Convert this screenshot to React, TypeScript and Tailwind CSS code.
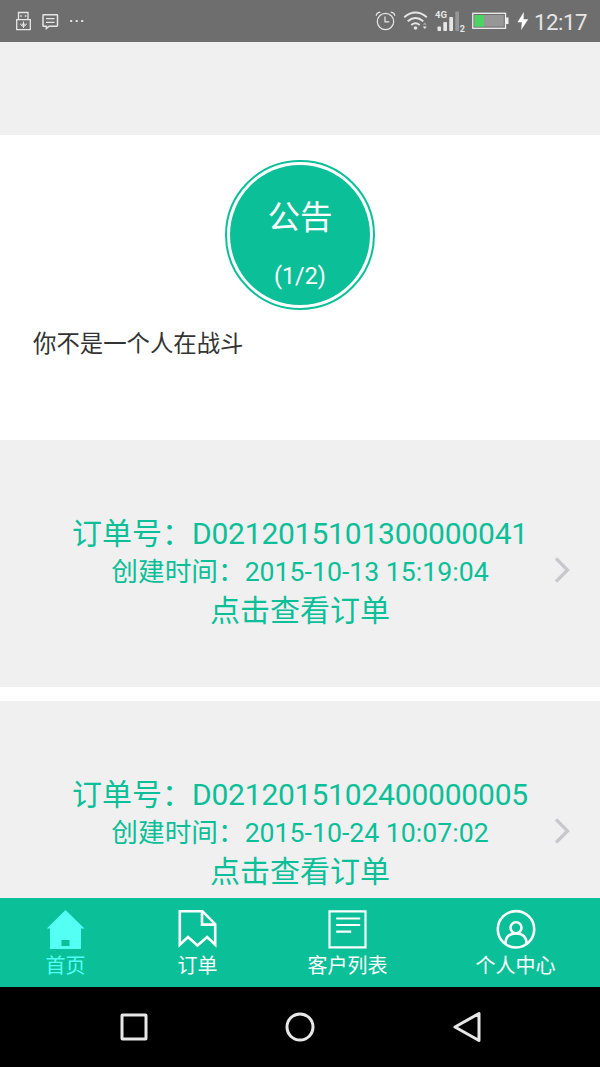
import type { ReactNode } from "react";

interface Order {
  id: string;
  createdAt: string;
}

const orders: Order[] = [
  { id: "D0212015101300000041", createdAt: "2015-10-13 15:19:04" },
  { id: "D0212015102400000005", createdAt: "2015-10-24 10:07:02" },
];

function StatusBar() {
  return (
    <header className="flex h-[41.5px] shrink-0 items-center bg-[#6e6e6e] pl-4 text-[#e6e6e6]">

      {/* USB */}
      <svg className="mr-[11px]" width={15} height={20} viewBox="0 0 15 20" fill="none" stroke="currentColor">
        <path d="M2.500 8V1.500h9.500V8M.7 8.700h13.600v10H.7Z" strokeWidth="1.300" />
        <path d="M4.200 5h1.600M8.800 5h1.600" strokeWidth="1.600" />
        <path d="M7.500 10.500v6.500M4.900 12.500v1.500l2.600 1.600 2.600-1.600v-1.500" strokeWidth="1" />
        <circle cx="7.500" cy="13.500" r="1.300" fill="currentColor" stroke="none" />
      </svg>

      {/* Message */}
      <svg width={17} height={18} viewBox="0 0 17 18" fill="none" stroke="currentColor" strokeWidth="1.500">
        <path d="M1.700 2.700h13.100q.7 0 .7.700v10.200q0 .7-.7.700H7l-2.600 2.200v-2.200H1.700q-.7 0-.7-.7V3.400q0-.7.700-.7Z" />
        <path d="M4 6.700h8.500M4 10.300h8.500" strokeWidth="1.200" />
      </svg>

      <svg className="ml-[10px]" width={16} height={4} viewBox="0 0 16 4" fill="currentColor">
        <path d="M1.200 1h2v2h-2zM6.700 1h2v2h-2zM12.200 1h2v2h-2z" />
      </svg>

      {/* Alarm */}
      <svg className="ml-auto" width={21} height={20} viewBox="0 0 21 20" fill="none" stroke="currentColor" strokeWidth="1.200">
        <circle cx="10.500" cy="10.500" r="8.200" />
        <path d="M10 5.500v5.300h4.200M1.300 4.800q-.2-2.800 4-3.600M19.700 4.800q.2-2.800-4-3.600" />
      </svg>

      {/* Wifi */}
      <svg className="ml-[7px]" width={26} height={21} viewBox="0 0 26 21" fill="none" stroke="currentColor" strokeWidth="1.900">
        <path d="M1.200 7.200q11.300-9.500 22.600 0M4.700 11.200q7.800-6.400 15.600 0M8.300 15q4.200-3.400 8.400 0" />
        <circle cx="12.500" cy="18" r="1.800" fill="currentColor" stroke="none" />
        <path d="m19.800 14.800 2-2.400 2 2.400Z" fill="#aaa" stroke="none" />
        <path d="m19.800 16.500 2 2.600 2-2.600Z" fill="currentColor" stroke="none" />
      </svg>

      {/* Signal */}
      <svg className="ml-[6px]" width={32} height={24} viewBox="0 0 32 24" fill="currentColor">
        <text x="0" y="9" fontSize="9.500" fontWeight="700" fontFamily="Roboto, sans-serif">4G</text>
        <rect x="2.500" y="17.500" width="3.500" height="4.500" rx=".7" />
        <rect x="8.300" y="13" width="3.700" height="9" rx=".7" />
        <rect x="14.300" y="8" width="3.700" height="14" rx=".7" />
        <rect x="20.300" y="2.500" width="3.700" height="19.500" rx=".7" fill="#969696" />
        <text x="24.700" y="22.500" fontSize="9" fontWeight="700" fontFamily="Roboto, sans-serif">2</text>
      </svg>

      {/* Battery */}
      <svg className="ml-[5px]" width={37} height={18} viewBox="0 0 37 18">
        <rect x=".8" y="1.300" width="32.700" height="15" fill="none" stroke="#f0f0f0" strokeWidth="1.300" />
        <path d="M34 5.500h2.500v6.500H34z" fill="#f0f0f0" />
        <rect x="2.500" y="3" width="29.300" height="11.600" fill="#979797" />
        <rect x="2.500" y="3" width="9.500" height="11.600" fill="#4bd364" />
      </svg>
      <svg className="ml-[8px]" width={12} height={20} viewBox="0 0 12 20" fill="#fff">
        <path d="M6.800 1 .5 11.200h4.300L4.200 19l7-10.800H6.600Z" />
      </svg>

      <span className="mt-[2px] mr-[13px] ml-[5px] text-[22.300px] leading-none tracking-[-0.5px]">12:17</span>
    </header>
  );
}

function Notice() {
  return (
    <section className="h-[305px] shrink-0 bg-white pt-[25px]">
      <div className="mx-auto flex size-[150px] items-center justify-center rounded-full border-2 border-[#0bbf98]">
        <div className="flex size-[140px] flex-col items-center rounded-full bg-[#0bbf98] pt-[33px] text-white">
          <span className="text-[32.500px] leading-[40px]">公告</span>
          <span className="mt-[23px] text-[23.300px] leading-[30px]">(1/2)</span>
        </div>
      </div>
      <p className="mt-[19px] pl-[33px] text-[23.400px] leading-[30px] text-[#333]">你不是一个人在战斗</p>
    </section>
  );
}

function OrderCard({ order }: { order: Order }) {
  return (
    <button className="flex h-[247px] w-full shrink-0 items-start bg-[#f0f0f0] pt-[75px] text-center text-[#0bbf98]">
      <span className="w-[45px]" />
      <span className="flex-1 whitespace-nowrap">
        <span className="block text-[30px] leading-[38px]">
          订单号：<span className="tracking-[-0.2px]">{order.id}</span>
        </span>
        <span className="block text-[26.670px] leading-[38px]">创建时间：{order.createdAt}</span>
        <span className="block text-[30px] leading-[39px]">点击查看订单</span>
      </span>
      <svg className="mt-[41px] mr-[28px]" width={17} height={28} viewBox="0 0 17 28" fill="none" stroke="#c7c7cc" strokeWidth="3.300">
        <path d="m1 2.500 11.500 11.500-11.500 11.500" />
      </svg>
    </button>
  );
}

interface TabProps {
  label: string;
  className: string;
  children: ReactNode;
}

function Tab({ label, className, children }: TabProps) {
  return (
    <button className={`flex flex-col items-center pt-[11px] ${className}`}>
      <svg width={40} height={40} viewBox="0 0 40 40" fill="none" stroke="currentColor" strokeWidth="2.600">
        {children}
      </svg>
      <span className="mt-[4px] text-[20px] leading-[26px]">{label}</span>
    </button>
  );
}

function TabBar() {
  return (
    <nav className="flex h-[89px] shrink-0 bg-[#0bbf98] text-white">
      <Tab label="首页" className="w-[131px] text-[#54fff4]">
        <path d="M19.500 1 .8 19.500h3.200V40h31V19.500h3.500ZM15.500 31h8v6h-8Z" fill="currentColor" fillRule="evenodd" stroke="none" />
      </Tab>
      <Tab label="订单" className="w-[133px]">
        <path d="M1.800 2.300H24.500l12.700 12.900v20.600L29.100 28 19.500 36.500 10 28l-8.200 7.800ZM24 2.300v13.300h13" />
      </Tab>
      <Tab label="客户列表" className="w-[167px]">
        <path d="M1.500 2.300h36v36H1.500Z" strokeWidth="2.200" />
        <path d="M8.200 9.500h24M8.200 16h24M8.200 22.700h15" strokeWidth="2.200" />
      </Tab>
      <Tab label="个人中心" className="w-[169px]">
        <circle cx="20" cy="20.300" r="18.200" />
        <circle cx="20" cy="18.700" r="5.500" />
        <path d="M9.400 35q0-10.500 10.600-10.500T30.600 35" />
      </Tab>
    </nav>
  );
}

function SystemNav() {
  return (
    <footer className="flex h-20 shrink-0 items-center justify-center gap-[134.500px] bg-black">
      <svg width={32} height={32} viewBox="0 0 32 32" fill="none" stroke="#e8e8e8" strokeWidth="3" strokeLinejoin="round">
        <rect x="4" y="4" width="24" height="24" rx=".5" />
      </svg>
      <svg width={32} height={32} viewBox="0 0 32 32" fill="none" stroke="#e8e8e8" strokeWidth="3">
        <circle cx="16" cy="16" r="13" />
      </svg>
      <svg width={32} height={32} viewBox="0 0 32 32" fill="none" stroke="#e8e8e8" strokeWidth="3" strokeLinejoin="round">
        <path d="M28 2.500v27L4 16Z" />
      </svg>
    </footer>
  );
}

export default function App() {
  return (
    <div className="flex h-[1067px] w-[600px] flex-col overflow-hidden bg-[#f0f0f0] font-['Roboto','Noto_Sans_CJK_SC',sans-serif]">
      <StatusBar />

      <main className="flex min-h-0 flex-1 flex-col overflow-hidden pt-[93.500px]">
        <Notice />
        <div className="flex flex-col gap-[14px] bg-white">
          {orders.map((order) => (
            <OrderCard key={order.id} order={order} />
          ))}
        </div>
      </main>

      <TabBar />
      <SystemNav />
    </div>
  );
}
